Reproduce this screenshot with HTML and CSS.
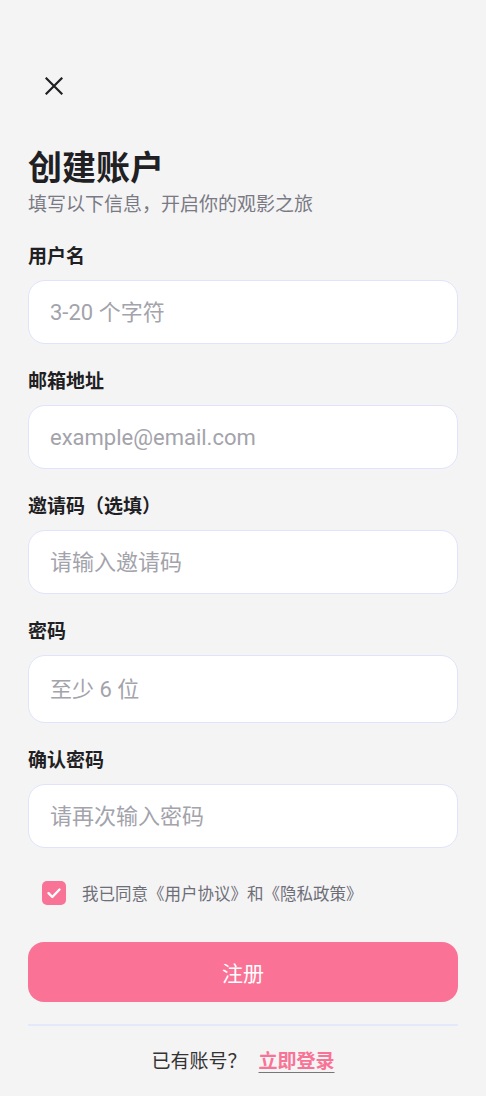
FILE: index.html
```html
<!DOCTYPE html>
<html lang="zh-CN">
<head>
    <meta charset="UTF-8">
    <meta name="viewport" content="width=device-width, initial-scale=1.0">
    <title>创建账户</title>
    <link rel="stylesheet" href="styles.css">
</head>
<body>

    <div class="page">
        <button class="close" aria-label="关闭">
            <svg width="18" height="18" viewBox="0 0 18 18">
                <path d="M1.5 1.5 L16.5 16.5 M16.5 1.5 L1.5 16.5" stroke="#1f1f24" stroke-width="2.2" stroke-linecap="square" fill="none"/>
            </svg>
        </button>

        <h1>创建账户</h1>
        <p class="subtitle">填写以下信息，开启你的观影之旅</p>

        <div class="field">
            <label for="username">用户名</label>
            <input type="text" id="username" placeholder="3-20 个字符">
        </div>

        <div class="field">
            <label for="email">邮箱地址</label>
            <input type="email" id="email" placeholder="example@email.com">
        </div>

        <div class="field">
            <label for="invite">邀请码（选填）</label>
            <input type="text" id="invite" placeholder="请输入邀请码">
        </div>

        <div class="field">
            <label for="password">密码</label>
            <input type="password" id="password" class="tall" placeholder="至少 6 位">
        </div>

        <div class="field">
            <label for="confirm">确认密码</label>
            <input type="password" id="confirm" placeholder="请再次输入密码">
        </div>

        <div class="agree">
            <span class="checkbox">
                <svg width="16" height="16" viewBox="0 0 16 16">
                    <path d="M2.5 8.2 L6.3 12 L13.5 4.5" stroke="#fff" stroke-width="2.4" fill="none" stroke-linecap="round" stroke-linejoin="round"/>
                </svg>
            </span>
            <span>我已同意《用户协议》和《隐私政策》</span>
        </div>

        <button class="submit">注册</button>

        <!-- divider between the form and the login link -->
        <div class="bar"></div>

        <div class="footer">
            已有账号？<a href="#">立即登录</a>
        </div>
    </div>

</body>
</html>
```

FILE: styles.css
```css
body {
    font-family: Roboto, "Noto Sans CJK SC", sans-serif;
    background-color: #f4f4f4;
    margin: 0;
    padding: 0;
    color: #1f1f24;
}

.page {
    padding: 68px 28px 0;
}

.close {
    width: 36px;
    height: 36px;
    margin-left: 8px;
    padding: 0;
    border: none;
    background: none;
    display: flex;
    align-items: center;
    justify-content: center;
}

h1 {
    font-size: 34px;
    font-weight: bold;
    line-height: 44px;
    margin: 42px 0 0;
}

.subtitle {
    font-size: 19px;
    line-height: 28px;
    color: #7a7a85;
    margin: 1px 0 0;
}

.field {
    margin-top: 26px;
}

label {
    display: block;
    font-size: 19px;
    font-weight: bold;
    line-height: 24px;
    color: #1f1f24;
}

input {
    display: block;
    box-sizing: border-box;
    width: 100%;
    height: 64px;
    margin-top: 11px;
    padding: 0 21px;
    border: 1.5px solid #dfe4fb;
    border-radius: 17px;
    background-color: #fff;
    font-family: Roboto, "Noto Sans CJK SC", sans-serif;
    font-size: 22px;
    color: #1f1f24;
}

input.tall {
    height: 68px;
}

input::placeholder {
    color: #a3a3ab;
}

.agree {
    display: flex;
    align-items: center;
    gap: 16px;
    height: 24px;
    margin: 33px 0 0 14px;
    font-size: 16.5px;
    color: #6e6e78;
}

.checkbox {
    width: 24px;
    height: 24px;
    border-radius: 5px;
    background-color: #f97396;
    display: flex;
    align-items: center;
    justify-content: center;
}

.submit {
    display: block;
    width: 100%;
    height: 60px;
    margin-top: 37px;
    border: none;
    border-radius: 16px;
    background-color: #fa7396;
    color: #fff;
    font-family: Roboto, "Noto Sans CJK SC", sans-serif;
    font-size: 21px;
}

.bar {
    height: 2px;
    background-color: #e3e8fb;
    margin-top: 22px;
}

.footer {
    text-align: center;
    margin-top: 22px;
    font-size: 19px;
    line-height: 28px;
    color: #333;
}

.footer a {
    margin-left: 12px;
    color: #f97396;
    font-weight: bold;
    text-decoration: underline;
    text-decoration-color: #777;
    text-underline-offset: 4px;
}
```
